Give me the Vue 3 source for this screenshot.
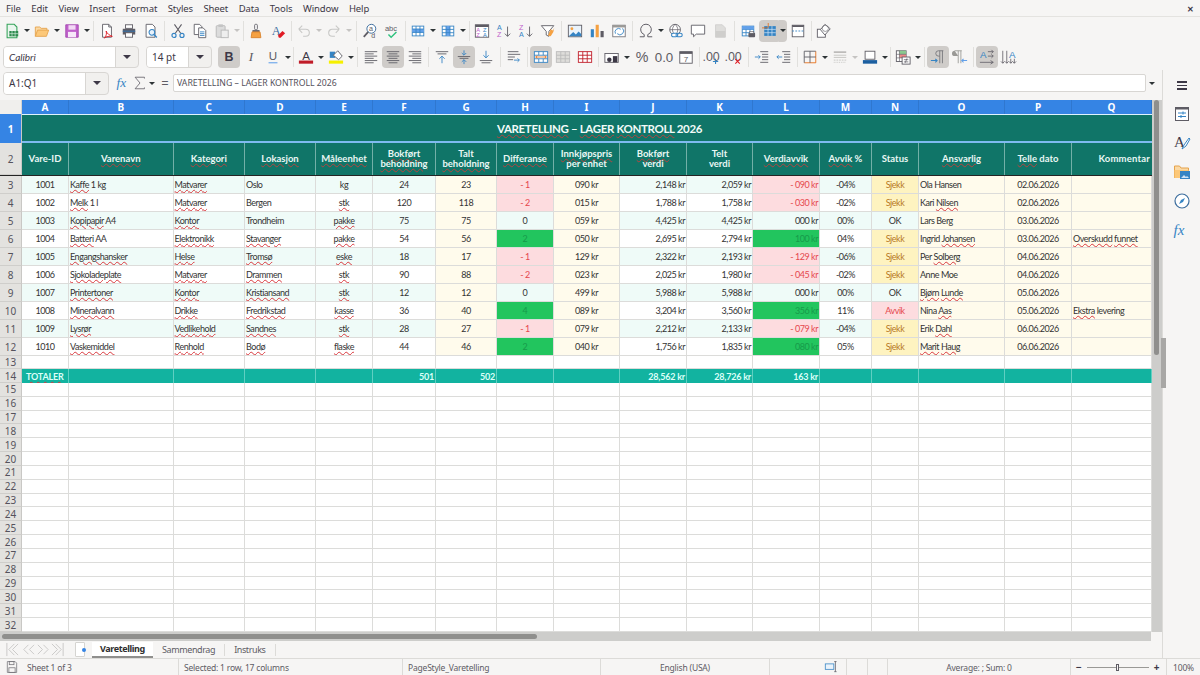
<script setup>
import { computed } from 'vue'

const L = (c, w = 1) => `fill="none" stroke="${c}" stroke-width="${w}"`
const table = (c = '#5e5c64') => `<rect x="2.5" y="3.5" width="13" height="11" fill="#fff" ${L(c)}/><path d="M2.5 7.2h13M2.5 10.9h13M6.8 3.5v11M11.2 3.5v11" ${L(c)}/>`

const icons = {
  new: `<path d="M3.5 1.5h8l3 3v12h-11z" fill="#eaf6ee" ${L('#35a35a', 1.2)}/><rect x="6" y="9" width="10" height="6" fill="#2e8b4f"/><path d="M9 9v6M12.5 9v6M6 12h10" ${L('#dff3e6', .7)}/>`,
  open: `<path d="M1.5 15V4.5h5l1.5 1.5h6.5V8" fill="#fbd9a4" ${L('#e5a34c')}/><path d="M1.5 15l2.5-7h12.5l-2.5 7z" fill="#fcc879" ${L('#e5a34c')}/>`,
  save: `<path d="M2 2h14v14H2z" fill="#c061cb" stroke="#a347ae"/><rect x="5" y="2.5" width="8" height="5" fill="#f2d9f5"/><rect x="4.5" y="10" width="9" height="6" fill="#f7e8f9"/>`,
  pdf: `<path d="M4 1.5h7l3 3V16H4z" fill="#fff" ${L('#5e5c64')}/><path d="M11 1.5v3h3" ${L('#5e5c64')}/><path d="M8 9c1 3 4 5 7 6-3-.3-7 0-9 2 2-2 3-5 2-8z" ${L('#e01b24')}/>`,
  print: `<rect x="5" y="2" width="8" height="4" fill="#fff" ${L('#5e5c64')}/><path d="M2 6.5h14V13H2z" fill="#5e5c64"/><rect x="2" y="8.5" width="14" height="1.5" fill="#3d6e9e"/><rect x="5" y="11" width="8" height="5" fill="#fff" ${L('#5e5c64')}/>`,
  preview: `<path d="M3.5 1.5h7l3 3V16h-10z" fill="#fff" ${L('#5e5c64')}/><circle cx="10" cy="10.5" r="3.2" fill="#e8f2fb" ${L('#3584c4', 1.2)}/><path d="M12.3 12.8l3.2 3.4" ${L('#3584c4', 1.6)}/>`,
  cut: `<path d="M5 1.5l7 10M13 1.5l-7 10" ${L('#5e5c64', 1.2)}/><circle cx="4.5" cy="14" r="2.3" ${L('#3584c4', 1.3)}/><circle cx="13.5" cy="14" r="2.3" ${L('#3584c4', 1.3)}/>`,
  copy: `<path d="M2.5 1.5h6l2.5 2.5v9h-8.5z" fill="#fff" ${L('#5e5c64')}/><path d="M7.5 5.5h5l3 3v8h-8z" fill="#fff" ${L('#5e5c64')}/><path d="M9 10h5M9 12h5M9 14h5" ${L('#3584c4')}/>`,
  paste: `<rect x="2.5" y="3" width="10" height="13" rx="1" fill="#dcdcdc" ${L('#b8b8b8')}/><rect x="5" y="1.5" width="5" height="3" fill="#c4c4c4"/><rect x="8" y="8" width="8" height="8.5" fill="#eee" ${L('#b8b8b8')}/>`,
  clone: `<rect x="7.5" y="1.5" width="3" height="6" rx="1" fill="#fff" ${L('#5e5c64')}/><path d="M5 8h8v2H5z" fill="#5e5c64"/><path d="M4.5 10h9l1 6.5h-11z" fill="#f5a142" ${L('#d9822b')}/>`,
  clear: `<text x="2" y="13" font-size="14" font-family="Liberation Serif" fill="#3d6e9e">A</text><path d="M9 14l5-5 3 2.5-5 5h-2z" fill="#e01b24"/>`,
  undo: `<path d="M3 7h8a4 4 0 0 1 0 8H8M3 7l4-4M3 7l4 4" ${L('#c8c8c6', 1.2)}/>`,
  redo: `<path d="M15 7H7a4 4 0 0 0 0 8h3M15 7l-4-4M15 7l-4 4" ${L('#c8c8c6', 1.2)}/>`,
  find: `<circle cx="10.5" cy="6.5" r="5" fill="#fff" ${L('#3d6e9e', 1.1)}/><path d="M7 10l-5 5.5" ${L('#5e5c64', 2)}/><text x="8" y="9" font-size="8" font-family="Liberation Sans" fill="#5e5c64">a</text><text x="10.5" y="17" font-size="8" font-family="Liberation Sans" fill="#5e5c64">d</text>`,
  spell: `<text x="1" y="9" font-size="8.5" font-family="Liberation Sans" fill="#5e5c64">abc</text><path d="M5 13l3 3 6-6" ${L('#2ec27e', 1.6)}/>`,
  rows: `<rect x="2.5" y="3.5" width="13" height="11" fill="#fff" ${L('#3584c4')}/><rect x="2.5" y="6.8" width="13" height="3.8" fill="#62a0ea"/><path d="M2.5 6.8h13M2.5 10.6h13M6.8 3.5v11M11.2 3.5v11" ${L('#3584c4')}/>`,
  cols: `<rect x="2.5" y="3.5" width="13" height="11" fill="#fff" ${L('#3584c4')}/><rect x="6.8" y="3.5" width="4.4" height="11" fill="#62a0ea"/><path d="M2.5 7.2h13M2.5 10.9h13M6.8 3.5v11M11.2 3.5v11" ${L('#3584c4')}/>`,
  sort: `<rect x="1.5" y="2" width="15" height="14" fill="#fff" ${L('#5e5c64')}/><rect x="1.5" y="2" width="15" height="2.5" fill="#5e5c64"/><text x="2.5" y="10" font-size="6.5" font-family="Liberation Sans" fill="#c061cb">A</text><text x="2.5" y="15.5" font-size="6.5" font-family="Liberation Sans" fill="#c061cb">Z</text><text x="10" y="10" font-size="6.5" font-family="Liberation Sans" fill="#3584c4">Z</text><text x="10" y="15.5" font-size="6.5" font-family="Liberation Sans" fill="#3584c4">A</text>`,
  asc: `<text x="1" y="8" font-size="8" font-family="Liberation Sans" fill="#3584c4">A</text><text x="1" y="16" font-size="8" font-family="Liberation Sans" fill="#c061cb">Z</text><path d="M13 4v11M10 12l3 3 3-3" ${L('#5e5c64')}/>`,
  desc: `<text x="1" y="8" font-size="8" font-family="Liberation Sans" fill="#c061cb">Z</text><text x="1" y="16" font-size="8" font-family="Liberation Sans" fill="#3584c4">A</text><path d="M13 4v11M10 12l3 3 3-3" ${L('#5e5c64')}/>`,
  filter: `<path d="M1.5 3h14l-5.5 6.5V15l-3-1.5V9.5z" fill="#fff" ${L('#5e5c64')}/><path d="M9 14l3-7 2.5 1.5L16 5.5 15 10l-3 5z" fill="#f5a142"/>`,
  image: `<rect x="1.5" y="2.5" width="15" height="13" fill="#eaf3fb" ${L('#5e5c64')}/><circle cx="5.5" cy="6.5" r="1.6" fill="#f5a142"/><path d="M2 15l5-5 3 3 3-3.5 3 3V15z" fill="#3584c4"/>`,
  chart: `<rect x="2" y="7" width="3.5" height="9" fill="#3584c4"/><rect x="7.5" y="2" width="3.5" height="14" fill="#f5a142"/><rect x="13" y="9" width="3.5" height="7" fill="#5e5c64"/>`,
  pivot: `<rect x="2" y="2.5" width="14" height="13" fill="#fff" ${L('#77767b')}/><rect x="2" y="2.5" width="14" height="2.5" fill="#9a9996"/><path d="M5 12a4 4 0 0 1 6-5M13 6a4 4 0 0 1-6 6" ${L('#3584c4')}/>`,
  omega: `<path d="M2 15.5h5V13a6 6 0 1 1 4 0v2.5h5" ${L('#5e5c64', 1.1)}/>`,
  link: `<circle cx="8" cy="7.5" r="6" fill="#fff" ${L('#5e5c64')}/><path d="M2 7.5h12M8 1.5c-4 4-4 8 0 12M8 1.5c4 4 4 8 0 12" ${L('#5e5c64', .8)}/><rect x="4" y="11.5" width="7" height="4" rx="2" fill="#fff" ${L('#3584c4', 1.2)}/><rect x="9" y="11.5" width="7" height="4" rx="2" ${L('#3584c4', 1.2)}/>`,
  comment: `<path d="M1.5 2.5h15v10H7l-3 3v-3H1.5z" fill="#fff" ${L('#5e5c64')}/>`,
  header: `<path d="M4 2h7.5L15 5.5V16H4z" fill="#dedddb" stroke="#d0cfcd"/><rect x="4" y="9" width="11" height="7" fill="#cfcecc"/>`,
  defprint: `${table('#3584c4')}<rect x="2.5" y="3.5" width="13" height="3.7" fill="#62a0ea"/><rect x="9.5" y="11" width="7.5" height="5" rx="1" fill="#5e5c64"/><rect x="11" y="9.5" width="4.5" height="2" fill="#fff" stroke="#5e5c64" stroke-width=".7"/>`,
  freeze: `<rect x="2.5" y="3.5" width="13" height="11" fill="#3584c4"/><path d="M2.5 7.2h13M2.5 10.9h13M6.8 3.5v11M11.2 3.5v11" ${L('#cfe3f5', .8)}/><path d="M7 0v5M0 5.5h7" ${L('#e66100', .8)}/>`,
  split: `<rect x="2.5" y="2.5" width="13" height="13" fill="#fff" ${L('#5e5c64')}/><rect x="2.5" y="2.5" width="13" height="2" fill="#5e5c64"/><path d="M2.5 9h13" stroke="#3584c4" stroke-dasharray="2 1.5" fill="none"/>`,
  shapes: `<rect x="1.5" y="7" width="9" height="9" fill="#fff" ${L('#5e5c64')}/><path d="M10 1.5l6 5-6 7-5-6z" fill="#fff" ${L('#5e5c64')}/><circle cx="10.5" cy="6" r="3.5" ${L('#77767b', .8)}/>`,
  bold: `<text x="9" y="14" text-anchor="middle" font-size="14" font-weight="700" font-family="Liberation Sans" fill="#3d3846">B</text>`,
  italic: `<text x="9" y="14" text-anchor="middle" font-size="15" font-style="italic" font-family="Liberation Serif" fill="#5e5c64">I</text>`,
  under: `<text x="9" y="12.5" text-anchor="middle" font-size="13" font-family="Liberation Sans" fill="#5e5c64">U</text><path d="M4 15.5h10" ${L('#62a0ea', 1.2)}/>`,
  fcolor: `<text x="9" y="12" text-anchor="middle" font-size="13" font-family="Liberation Sans" fill="#3d3846">A</text><rect x="1" y="13" width="16" height="3.5" fill="#c01c28"/>`,
  bgcolor: `<rect x="1" y="13" width="16" height="3.5" fill="#f6f000"/><path d="M2 3h6v7H2z" fill="#3584c4"/><path d="M6 7l5-5 5 6-4 4z" fill="#fff" ${L('#5e5c64')}/>`,
  left: `<path d="M2 3h14M2 5.5h10M2 8h14M2 10.5h10M2 13h14M2 15.5h10" ${L('#5e5c64')}/>`,
  center: `<path d="M2 3h14M4 5.5h10M2 8h14M4 10.5h10M2 13h14M4 15.5h10" ${L('#5e5c64')}/>`,
  right: `<path d="M2 3h14M6 5.5h10M2 8h14M6 10.5h10M2 13h14M6 15.5h10" ${L('#5e5c64')}/>`,
  top: `<path d="M2 3h14M4 5.5h10" ${L('#5e5c64')}/><path d="M9 16V8M6 11l3-3 3 3" ${L('#3584c4')}/>`,
  middle: `<path d="M2 8.5h14M4 10.5h10" ${L('#5e5c64')}/><path d="M9 1.5v5M6.5 4.5L9 7l2.5-2.5M9 17v-5M6.5 14.5L9 12l2.5 2.5" ${L('#3584c4')}/>`,
  bottom: `<path d="M2 13h14M4 15.5h10" ${L('#5e5c64')}/><path d="M9 2v8M6 7l3 3 3-3" ${L('#3584c4')}/>`,
  wrap: `<path d="M2 3h12M2 6h14M2 9h8M2 12h6" ${L('#5e5c64')}/><path d="M9 12.5h6l-2-2M15 12.5l-2 2" ${L('#3584c4')}/>`,
  merge: `<rect x="1.5" y="3" width="15" height="12" fill="#fff" ${L('#3584c4')}/><path d="M1.5 7h15M1.5 11h15M6.5 3v4M11.5 3v4M6.5 11v4M11.5 11v4" ${L('#3584c4')}/><path d="M3 9h12M3 9l2-1.5M3 9l2 1.5M15 9l-2-1.5M15 9l-2 1.5" ${L('#e66100', .8)}/>`,
  mergec: `<rect x="1.5" y="3" width="15" height="12" fill="#deddda" ${L('#bbb')}/><path d="M1.5 7h15M1.5 11h15M6.5 3v12M11.5 3v12" ${L('#bbb')}/>`,
  split2: `<rect x="1.5" y="3" width="15" height="12" fill="#fff" ${L('#c01c28')}/><path d="M1.5 7h15M1.5 11h15M6.5 3v12M11.5 3v12" ${L('#c01c28')}/>`,
  cur: `<rect x="1" y="5" width="15" height="10" fill="#fff" ${L('#5e5c64')}/><circle cx="6" cy="12" r="2.5" fill="#3d3846"/><rect x="10" y="8" width="5" height="7" fill="#3d3846"/>`,
  pct: `<text x="9" y="15" text-anchor="middle" font-size="16" font-family="Liberation Sans" fill="#5e5c64">%</text>`,
  num: `<text x="9" y="15" text-anchor="middle" font-size="15" font-family="Liberation Sans" fill="#5e5c64">0.0</text>`,
  date: `<rect x="2" y="3" width="14" height="13" fill="#fff" ${L('#5e5c64')}/><rect x="2" y="3" width="14" height="2.5" fill="#5e5c64"/><text x="9" y="14.5" text-anchor="middle" font-size="9" font-family="Liberation Sans" fill="#5e5c64">7</text>`,
  adddec: `<text x="8" y="13" text-anchor="middle" font-size="14" font-family="Liberation Sans" fill="#5e5c64">.00</text><path d="M13 11v6M10 14h6" ${L('#3584c4', 1.2)}/>`,
  deldec: `<text x="8" y="13" text-anchor="middle" font-size="14" font-family="Liberation Sans" fill="#5e5c64">.00</text><path d="M10.5 11.5l5 5M15.5 11.5l-5 5" ${L('#e01b24', 1.2)}/>`,
  indinc: `<path d="M7 3h9M9 6h7M9 9h7M9 12h7M7 15h9" ${L('#5e5c64')}/><path d="M1 9h6M5 7l2 2-2 2" ${L('#3584c4')}/>`,
  inddec: `<path d="M7 3h9M9 6h7M9 9h7M9 12h7M7 15h9" ${L('#5e5c64')}/><path d="M1 9h6M3 7L1 9l2 2" ${L('#3584c4')}/>`,
  border: `<path d="M2.5 15.5h13v-13" ${L('#e66100', .9)}/><path d="M2.5 15.5v-13h13M9 2.5v13M2.5 9h13" ${L('#5e5c64')}/>`,
  bstyle: `<path d="M2 3.5h14" ${L('#b0afad', 1.6)}/><path d="M2 7h14M2 9.5h14" ${L('#c4c3c1')}/><path d="M2 12.5h14" stroke="#c4c3c1" stroke-dasharray="2 1" fill="none"/><path d="M2 15h14" stroke="#c4c3c1" stroke-dasharray="1 1" fill="none"/>`,
  bcolor: `<rect x="3.5" y="2.5" width="11" height="9" fill="#fff" ${L('#5e5c64')}/><rect x="1" y="12.5" width="16" height="4" fill="#1c5fa0"/>`,
  cond: `<rect x="1.5" y="2" width="11" height="12" fill="#fff" ${L('#5e5c64')}/><rect x="5" y="2" width="7.5" height="4" fill="#8ac98f"/><rect x="5" y="6" width="7.5" height="4" fill="#e88"/><path d="M1.5 6h11M1.5 10h11M5 2v12" ${L('#5e5c64', .7)}/><rect x="8" y="9" width="9" height="8" fill="#fff" ${L('#5e5c64')}/><path d="M10 12h5M10 14.5h5M13.5 10.5l-2 5" ${L('#5e5c64', .8)}/>`,
  ltr: `<path d="M15 2H9.5a3 3 0 0 0 0 6H11M11 2v14M14 2v14" ${L('#77767b')}/><path d="M1 13h7M6 11l2 2-2 2" ${L('#3584c4', 1.2)}/>`,
  rtl: `<path d="M3 2h8M7 2v14M10 2v14" ${L('#9a9996')}/><path d="M3 2a3 3 0 0 0 0 6h4z" fill="#9a9996"/><path d="M11 13h6M13 11l-2 2 2 2" ${L('#62a0ea', 1.2)}/>`,
  ah: `<text x="1" y="10" font-size="11" font-family="Liberation Sans" fill="#3584c4">A</text><path d="M1 15h15M13 13l3 2-3 2M10 3h6M14 1l2 2-2 2M10 8h6M14 6l2 2-2 2" ${L('#5e5c64', .9)}/>`,
  av: `<text x="9" y="10" font-size="11" font-family="Liberation Sans" fill="#3584c4">A</text><path d="M2 2v14M0 14l2 2 2-2M6.5 2v14M4.5 14l2 2 2-2M11 11v5M9 14l2 2 2-2M15 11v5M13 14l2 2 2-2" ${L('#5e5c64', .9)}/>`,
  fx: `<text x="0.5" y="14" font-size="15" font-style="italic" font-family="Liberation Serif" fill="#3584c4">fx</text>`,
  sum: `<path d="M14 4V2.5H3.5L9 9l-5.5 6.5H14V14" ${L('#5e5c64', .9)}/>`,
  props: `<rect x="2.5" y="2.5" width="13" height="13" fill="#fff" ${L('#5e5c64')}/><rect x="2.5" y="2.5" width="13" height="2" fill="#5e5c64"/><path d="M5 8h8M5 11.5h8M10 6.5v3M8 10v3" ${L('#3584c4')}/>`,
  styles: `<text x="1" y="13" font-size="15" font-family="Liberation Serif" fill="#3d3846">A</text><path d="M9 15l2-4 5-7 1 1-4 7z" fill="#fff" ${L('#3584c4')}/>`,
  gallery: `<path d="M1.5 15V3h5l1.5 2h7.5v3" fill="#fbd9a4" ${L('#e5a34c')}/><path d="M1.5 15V7h14v8z" fill="#fcc879"/><rect x="7" y="8" width="10" height="8" fill="#3584c4"/><path d="M8 15l3-3 2 2 1-1 2 2z" fill="#cfe3f5"/>`,
  nav: `<circle cx="9" cy="9" r="7" fill="#fff" ${L('#3d6e9e', 1.2)}/><path d="M12 6L10 10 6 12 8 8z" fill="#3584c4"/>`,
  docstat: `<path d="M3 2h10l2 2v12H3z" ${L('#77767b')}/><rect x="5.5" y="2" width="6" height="4" ${L('#77767b')}/><rect x="5" y="10" width="8" height="6" ${L('#77767b')}/>`,
  selmode: `<rect x="1" y="5" width="11" height="7" fill="#eaf3fb" ${L('#3584c4')}/><path d="M14 2v13M12.5 2h3M12.5 15h3" ${L('#5e5c64')}/>`
}

// |N is a separator taking N pixels, * marks a pressed button
const bar1 = ['new', 'd', 'open', 'd', 'save', 'd', '|5', 'pdf', 'print', 'preview', '|5', 'cut', 'copy', 'paste', 'dx', '|4', 'clone', 'clear', '|4', 'undo', 'dx', 'redo', 'dx', '|6', 'find', 'spell', '|4', 'rows', 'd', 'cols', 'd', '|4', 'sort', 'asc', 'desc', 'filter', '|5', 'image', 'chart', 'pivot', '|5', 'omega', 'd', 'link', 'comment', 'header', '|6', 'defprint', 'freeze*', 'd*', 'split', '|4', 'shapes']
const bar2 = ['bold*', 'italic', 'under', 'd', '|3', 'fcolor', 'd', 'bgcolor', 'd', '|5', 'left', 'center*', 'right', '|5', 'top', 'middle*', 'bottom', '|6', 'wrap', '|5', 'merge*', 'mergec', 'split2', '|5', 'cur', 'd', 'pct', 'num', 'date', '|4', 'adddec', 'deldec', '|6', 'indinc', 'inddec', '|4', 'border', 'd', 'bstyle', 'dx', 'bcolor', 'd', '|3', 'cond', 'd', '|5', 'ltr*', 'rtl', '|5', 'ah*', 'av']

const tool = (k) => {
  const active = k.endsWith('*')
  const name = active ? k.slice(0, -1) : k
  if (name[0] === '|') return { kind: 'sep', cls: 's' + name.slice(1) }
  if (name === 'd' || name === 'dx') return { kind: name === 'dx' ? 'drop off' : 'drop', active }
  return { kind: 'btn', name, active }
}
const tools1 = bar1.map(tool)
const tools2 = bar2.map(tool)

const menus = ['File', 'Edit', 'View', 'Insert', 'Format', 'Styles', 'Sheet', 'Data', 'Tools', 'Window', 'Help']
const letters = 'ABCDEFGHIJKLMNOPQ'.split('')
const sideIcons = ['props', 'styles', 'gallery', 'nav', 'fx']

const headers = ['Vare-ID', '~Varenavn~', '~Kategori~', '~Lokasjon~', '~Måleenhet~', ['~Bokført~', '~beholdning~'], ['Talt', '~beholdning~'], '~Differanse~', ['~Innkjøpspris~', 'per enhet'], ['~Bokført~', 'verdi'], ['Telt', 'verdi'], '~Verdiavvik~', '~Avvik~ %', 'Status', '~Ansvarlig~', '~Telle~ dato', 'Kommentar']

const data = [
  [1001, '~Kaffe~ 1 kg', '~Matvarer~', 'Oslo', 'kg', 24, 23, '- 1', '090 kr', '2,148 kr', '2,059 kr', '- 090 kr', '-04%', 'Sjekk', 'Ola Hansen', '02.06.2026', ''],
  [1002, '~Melk~ 1 l', '~Matvarer~', 'Bergen', '~stk~', 120, 118, '- 2', '015 kr', '1,788 kr', '1,758 kr', '- 030 kr', '-02%', 'Sjekk', 'Kari ~Nilsen~', '02.06.2026', ''],
  [1003, '~Kopipapir~ A4', '~Kontor~', 'Trondheim', '~pakke~', 75, 75, '0', '059 kr', '4,425 kr', '4,425 kr', '000 kr', '00%', 'OK', 'Lars Berg', '03.06.2026', ''],
  [1004, '~Batteri~ AA', '~Elektronikk~', '~Stavanger~', '~pakke~', 54, 56, '2', '050 kr', '2,695 kr', '2,794 kr', '100 kr', '04%', 'Sjekk', 'Ingrid ~Johansen~', '03.06.2026', '~Overskudd~ ~funnet~'],
  [1005, '~Engangshansker~', '~Helse~', '~Tromsø~', '~eske~', 18, 17, '- 1', '129 kr', '2,322 kr', '2,193 kr', '- 129 kr', '-06%', 'Sjekk', 'Per ~Solberg~', '04.06.2026', ''],
  [1006, '~Sjokoladeplate~', '~Matvarer~', '~Drammen~', '~stk~', 90, 88, '- 2', '023 kr', '2,025 kr', '1,980 kr', '- 045 kr', '-02%', 'Sjekk', 'Anne Moe', '04.06.2026', ''],
  [1007, '~Printertoner~', '~Kontor~', '~Kristiansand~', '~stk~', 12, 12, '0', '499 kr', '5,988 kr', '5,988 kr', '000 kr', '00%', 'OK', '~Bjørn~ ~Lunde~', '05.06.2026', ''],
  [1008, '~Mineralvann~', '~Drikke~', '~Fredrikstad~', '~kasse~', 36, 40, '4', '089 kr', '3,204 kr', '3,560 kr', '356 kr', '11%', 'Avvik', 'Nina ~Aas~', '05.06.2026', '~Ekstra~ levering'],
  [1009, '~Lysrør~', '~Vedlikehold~', '~Sandnes~', '~stk~', 28, 27, '- 1', '079 kr', '2,212 kr', '2,133 kr', '- 079 kr', '-04%', 'Sjekk', 'Erik ~Dahl~', '06.06.2026', ''],
  [1010, '~Vaskemiddel~', '~Renhold~', '~Bodø~', '~flaske~', 44, 46, '2', '040 kr', '1,756 kr', '1,835 kr', '080 kr', '05%', 'Sjekk', '~Marit~ ~Haug~', '06.06.2026', '']
]

// ~word~ gets the spellcheck underline
const parts = (s) => String(s).split(/(~[^~]+~)/).filter(Boolean).map((p) => (p[0] === '~' ? { t: p.slice(1, -1), sp: true } : { t: p, sp: false }))

const aligns = ['c', 'l', 'l', 'l', 'c', 'c', 'c', 'c', 'c', 'r', 'r', 'r', 'c', 'c', 'l', 'c', 'l']
const yellow = [6, 8, 14, 15, 16]

const rows = computed(() => data.map((r, i) => ({
  n: i + 3,
  cells: r.map((v, c) => {
    const cls = [aligns[c], i % 2 ? 'plain' : 'mint']
    if (yellow.includes(c)) cls.push('yellow')
    if (c === 7 || c === 11) {
      const d = r[7]
      if (d[0] === '-') cls.push('neg')
      else if (d !== '0') cls.push('pos')
    }
    if (c === 13) cls.push(v === 'Sjekk' ? 'check' : v === 'Avvik' ? 'neg' : 'mint')
    return { parts: parts(v), cls }
  })
})))

const totals = { 5: '501', 6: '502', 9: '28,562 kr', 10: '28,726 kr', 11: '163 kr' }
const emptyRows = Array.from({ length: 18 }, (_, i) => i + 15)
</script>

<template>
  <div class="app">
    <div class="menubar">
      <span v-for="m in menus" :key="m" class="menu">{{ m }}</span>
      <span class="close">✕</span>
    </div>

    <div class="toolbar one">
      <template v-for="(t, i) in tools1" :key="i">
        <span v-if="t.kind === 'sep'" class="sep" :class="t.cls"></span>
        <span v-else-if="t.kind !== 'btn'" class="caret" :class="[t.kind, { on: t.active }]"></span>
        <span v-else class="btn" :class="{ on: t.active }"><svg viewBox="0 0 18 18" v-html="icons[t.name]"></svg></span>
      </template>
    </div>

    <div class="toolbar two">
      <div class="combo font"><span class="field ital">Calibri</span><span class="arrow"></span></div>
      <div class="combo size"><span class="field">14 pt</span><span class="arrow"></span></div>
      <template v-for="(t, i) in tools2" :key="i">
        <span v-if="t.kind === 'sep'" class="sep" :class="t.cls"></span>
        <span v-else-if="t.kind !== 'btn'" class="caret" :class="t.kind"></span>
        <span v-else class="btn" :class="{ on: t.active }"><svg viewBox="0 0 18 18" v-html="icons[t.name]"></svg></span>
      </template>
    </div>

    <div class="body">
      <div class="work">
        <div class="formula">
          <div class="combo namebox"><span class="field">A1:Q1</span><span class="arrow"></span></div>
          <span class="fbtn fx"><svg viewBox="0 0 18 18" v-html="icons.fx"></svg></span>
          <span class="fbtn"><svg viewBox="0 0 18 18" v-html="icons.sum"></svg></span>
          <span class="caret small-caret"></span>
          <span class="equals">=</span>
          <div class="input">VARETELLING – LAGER KONTROLL 2026</div>
          <span class="caret end-caret"></span>
        </div>

        <div class="sheetwrap">
          <div class="sheet">
            <div class="row colhead">
              <div class="corner"></div>
              <div v-for="l in letters" :key="l" class="chead">{{ l }}</div>
            </div>
            <div class="row r1">
              <div class="rh sel">1</div>
              <div class="title">
                <span><span class="sp">VARETELLING</span> – <span class="sp">LAGER</span> <span class="sp">KONTROLL</span> 2026</span>
              </div>
            </div>
            <div class="row r2">
              <div class="rh">2</div>
              <div v-for="(h, i) in headers" :key="i" class="hcell">
                <template v-if="Array.isArray(h)">
                  <div v-for="(ln, j) in h" :key="j"><template v-for="(p, k) in parts(ln)" :key="k"><span :class="{ sp: p.sp }">{{ p.t }}</span></template></div>
                </template>
                <div v-else><template v-for="(p, k) in parts(h)" :key="k"><span :class="{ sp: p.sp }">{{ p.t }}</span></template></div>
              </div>
            </div>
            <div v-for="r in rows" :key="r.n" class="row rdata">
              <div class="rh">{{ r.n }}</div>
              <div v-for="(c, i) in r.cells" :key="i" class="cell" :class="c.cls">
                <span><template v-for="(p, k) in c.parts" :key="k"><span :class="{ sp: p.sp }">{{ p.t }}</span></template></span>
              </div>
            </div>
            <div class="row r13">
              <div class="rh">13</div>
              <div v-for="l in letters" :key="l" class="cell plain"></div>
            </div>
            <div class="row r14">
              <div class="rh">14</div>
              <div v-for="(l, i) in letters" :key="l" class="tcell" :class="{ first: i === 0 }">
                <span v-if="i === 0" class="sp">TOTALER</span>
                <span v-else-if="totals[i]">{{ totals[i] }}</span>
              </div>
            </div>
            <div v-for="n in emptyRows" :key="n" class="row rempty">
              <div class="rh">{{ n }}</div>
              <div v-for="l in letters" :key="l" class="cell plain"></div>
            </div>
          </div>
          <div class="vscroll"><div class="vthumb"></div></div>
        </div>

        <div class="hscroll"><div class="hthumb"></div></div>

        <div class="tabbar">
          <svg class="tabnav" viewBox="0 0 62 16">
            <path d="M1 1v14M9 2L3 8l6 6M13 2L7 8l6 6M24 3l-5 5 5 5M30 3l-5 5 5 5M34 3l5 5-5 5M40 3l5 5-5 5M49 2l6 6-6 6M53 2l6 6-6 6M61 1v14" fill="none" stroke="#c9c8c6" />
          </svg>
          <span class="tabadd"><i></i></span>
          <span class="tab active">Varetelling</span>
          <span class="tab">Sammendrag</span>
          <span class="tab">Instruks</span>
        </div>
      </div>

      <div class="sidebar">
        <div class="hamb"><i></i><i></i><i></i></div>
        <span v-for="s in sideIcons" :key="s" class="sidebtn"><svg viewBox="0 0 18 18" v-html="icons[s]"></svg></span>
      </div>
      <div class="handle"></div>
    </div>

    <div class="status">
      <div class="st first"><svg viewBox="0 0 18 18" v-html="icons.docstat"></svg><span>Sheet 1 of 3</span></div>
      <div class="st">Selected: 1 row, 17 columns</div>
      <div class="st">PageStyle_Varetelling</div>
      <div class="st mid">English (USA)</div>
      <div class="st mode"><svg class="wide" viewBox="0 0 18 18" v-html="icons.selmode"></svg></div>
      <div class="st"></div>
      <div class="st"></div>
      <div class="st mid">Average: ; Sum: 0</div>
      <div class="st zoom">
        <b class="pm">−</b><span class="slider"><i></i></span><b class="pm">+</b>
      </div>
      <div class="st mid">100%</div>
    </div>
  </div>
</template>

<style>
html, body { margin: 0; background: #f6f5f4; }
</style>

<style scoped>
.app {
  --cols: 22px 47px 104.5px 71.5px 71px 57px 63px 61px 57px 66px 67px 66px 67px 52px 47px 86px 67px 80px;
  width: 1200px;
  height: 675px;
  display: flex;
  flex-direction: column;
  overflow: hidden;
  background: #f6f5f4;
  font-family: "Noto Sans", sans-serif;
  color: #3d3846;
  position: relative;
}
.menubar {
  height: 17px;
  display: flex;
  align-items: center;
  font-size: 9.5px;
  letter-spacing: -0.1px;
  padding-left: 1px;
  border-bottom: 1px solid #e4e3e0;
  box-sizing: border-box;
}
.menu { padding: 0 5px; margin-right: 0.5px; }
.close { margin-left: auto; margin-right: 6px; font-size: 8px; font-weight: 700; }

.toolbar { display: flex; align-items: center; }
.toolbar.one { height: 27px; padding-left: 1px; }
.toolbar.two { height: 26px; padding-left: 3px; }
.btn {
  width: 22px;
  height: 22px;
  display: flex;
  align-items: center;
  justify-content: center;
  border-radius: 4px;
  flex: none;
}
.btn svg { width: 16px; height: 16px; display: block; overflow: visible; }
.btn.on { background: #cfccc9; }
.sep { width: 1px; height: 20px; background: #e1e0dd; flex: none; }
.s3 { margin: 0 1px; }
.s4 { margin: 0 1.5px; }
.s5 { margin: 0 2px; }
.s6 { margin: 0 2.5px; }
.caret { width: 8px; display: flex; justify-content: center; flex: none; align-items: center; }
.caret::after {
  content: "";
  border-left: 3px solid transparent;
  border-right: 3px solid transparent;
  border-top: 3px solid #2e3436;
}
.caret.off::after { border-top-color: #c5c4c2; }
.caret.on { background: #cfccc9; border-radius: 0 4px 4px 0; height: 22px; margin-left: -2px; }

.combo {
  display: flex;
  height: 22px;
  border: 1px solid #d8d6d3;
  border-radius: 4px;
  box-sizing: border-box;
  background: #f1f0ee;
  flex: none;
  font-size: 10px;
}
.field {
  flex: 1;
  background: #fff;
  display: flex;
  align-items: center;
  padding-left: 5px;
  border-right: 1px solid #d8d6d3;
  border-radius: 3px 0 0 3px;
}
.ital { font-style: italic; font-family: Lato, sans-serif; }
.arrow { width: 22px; display: flex; align-items: center; justify-content: center; flex: none; }
.arrow::after {
  content: "";
  border-left: 4px solid transparent;
  border-right: 4px solid transparent;
  border-top: 4px solid #3d3846;
}
.font { width: 136px; margin-right: 7px; }
.size { width: 66px; margin-right: 6px; }

.body { flex: 1; display: flex; min-height: 0; position: relative; }
.work { width: 1162px; display: flex; flex-direction: column; flex: none; }

.formula { height: 30px; display: flex; align-items: center; padding-left: 3px; box-sizing: border-box; padding-bottom: 4px; }
.namebox { width: 106px; height: 23px; margin-right: 7px; }
.namebox .field { padding-left: 5px; }
.fbtn { width: 15px; height: 16px; flex: none; }
.fbtn svg { width: 16px; height: 16px; display: block; overflow: visible; }
.fx { width: 16px; }
.small-caret { width: 10px; }
.equals { width: 16px; text-align: center; font-size: 13px; flex: none; color: #5e5c64; }
.input {
  width: 973px;
  height: 18px;
  background: #fff;
  border: 1px solid #d8d6d3;
  border-radius: 2px;
  box-sizing: border-box;
  font-size: 8.7px;
  line-height: 16px;
  padding-left: 3px;
  flex: none;
  color: #55525c;
}
.end-caret { width: 12px; }

.sheetwrap { display: flex; height: 532px; }
.sheet { width: 1152px; flex: none; font-family: Lato, sans-serif; background: #fff; }
.row { display: grid; grid-template-columns: var(--cols); box-sizing: border-box; }
.colhead { height: 14px; }
.r1 { height: 29px; }
.r2 { height: 33px; border-bottom: 1px solid #242424; }
.rdata { height: 18px; }
.r13 { height: 13px; }
.r14 { height: 14px; }
.rempty { height: 13.83px; }

.corner { background: #f0efed; border-right: 1px solid #d5d4d1; }
.chead {
  background: #3584e4;
  color: #fff;
  font: 700 10px "Noto Sans", sans-serif;
  display: flex;
  align-items: center;
  justify-content: center;
  border-right: 1px solid #2f77cf;
}
.rh {
  background: #e3e2df;
  color: #55525c;
  font: 10px "Noto Sans", sans-serif;
  display: flex;
  align-items: center;
  justify-content: center;
  border-right: 1px solid #c9c8c5;
  border-bottom: 1px solid #cfcecb;
  box-sizing: border-box;
  min-height: 0;
  overflow: hidden;
}
.rh.sel { background: #3584e4; color: #fff; font-weight: 700; border-bottom: 0; }
.title {
  grid-column: 2 / -1;
  background: #107568;
  color: #f2fbf9;
  font-weight: 700;
  font-size: 11.5px;
  letter-spacing: -0.35px;
  display: flex;
  align-items: center;
  justify-content: center;
  padding-left: 25px;
  border-top: 1px solid #dff3ff;
  border-bottom: 2px solid #7fbbf0;
  box-sizing: border-box;
}
.hcell {
  background: #107568;
  color: #e9f7f4;
  font-weight: 700;
  font-size: 9.5px;
  line-height: 10px;
  display: flex;
  flex-direction: column;
  align-items: center;
  justify-content: center;
  text-align: center;
  border-right: 1px solid #72b0a8;
  box-sizing: border-box;
  white-space: nowrap;
  overflow: hidden;
}
.hcell:last-child { align-items: flex-end; padding-right: 2px; letter-spacing: 0.2px; border-right: 0; }
.hcell .sp, .title .sp { text-decoration-color: #b5443f; }
.cell {
  font-size: 9px;
  letter-spacing: -0.45px;
  color: #333;
  display: flex;
  align-items: center;
  padding: 0 1px;
  border-right: 1px solid #dcdcda;
  border-bottom: 1px solid #dcdcda;
  box-sizing: border-box;
  min-width: 0;
  white-space: nowrap;
  overflow: hidden;
}
.cell.l { justify-content: flex-start; }
.cell.c { justify-content: center; }
.cell.r { justify-content: flex-end; }
.plain { background: #fff; }
.mint { background: #effbf8; }
.yellow { background: #fffbec; }
.neg { background: #fddcdf; color: #e5484d; }
.pos { background: #22c55e; color: #179a4a; }
.check { background: #fef3c0; color: #b7791f; }
.tcell {
  background: #12b3a0;
  color: #dcfff8;
  font-weight: 700;
  font-size: 9px;
  letter-spacing: -0.2px;
  display: flex;
  align-items: center;
  justify-content: flex-end;
  padding: 0 1px;
  border-right: 1px solid #5fcfc2;
  box-sizing: border-box;
  white-space: nowrap;
  overflow: hidden;
}
.tcell.first { justify-content: flex-start; padding-left: 4px; }
.sp {
  text-decoration: underline wavy #d9393e;
  text-decoration-thickness: 1px;
  text-underline-offset: 1px;
}

.vscroll { width: 10px; background: #cdcdcb; flex: none; padding-left: 2px; box-sizing: border-box; }
.vthumb { width: 5px; height: 255px; background: #8f8f8d; border-radius: 3px; }
.hscroll { height: 9px; width: 1151px; background: #cdcdcb; padding: 2px 0 0 2px; box-sizing: border-box; }
.hthumb { width: 535px; height: 5px; background: #8f8f8d; border-radius: 3px; }

.tabbar { height: 17px; display: flex; align-items: center; font-size: 9px; letter-spacing: -0.4px; color: #5e5c64; }
.tabnav { width: 60px; height: 15px; margin-left: 5px; flex: none; }
.tabadd {
  width: 10px;
  height: 15px;
  background: #fff;
  border: 1px solid #d5d4d1;
  margin-left: 10px;
  border-radius: 1px;
  display: flex;
  align-items: center;
  justify-content: flex-end;
  flex: none;
  box-sizing: border-box;
}
.tabadd i { width: 4px; height: 4px; border-radius: 50%; background: #3584e4; margin-right: -2px; display: block; }
.tab { padding: 0 9px; border-right: 1px solid #dcdbd8; height: 12px; line-height: 12px; }
.tab.active {
  margin-left: 7px;
  padding: 0 8px;
  background: #fff;
  color: #2e2e2e;
  font-weight: 700;
  border-right: 0;
  border-bottom: 2px solid #8f8f8d;
  height: 14px;
  line-height: 14px;
  width: 45px;
}

.sidebar {
  width: 38px;
  border-left: 1px solid #dcdbd8;
  box-sizing: border-box;
  display: flex;
  flex-direction: column;
  align-items: center;
  padding-top: 11px;
}
.hamb { width: 10px; display: flex; flex-direction: column; gap: 2px; margin-bottom: 15px; }
.hamb i { height: 1.5px; background: #3d3846; display: block; }
.sidebtn { width: 18px; height: 18px; margin-bottom: 11px; }
.sidebtn svg { width: 18px; height: 18px; display: block; overflow: visible; }
.handle { position: absolute; left: 1161px; top: 268px; width: 5px; height: 50px; background: #a8a7a5; }

.status {
  height: 17px;
  display: grid;
  grid-template-columns: 179px 224px 198px 169px 77px 21px 20px 183px 96px 33px;
  border-top: 1px solid #dcdbd8;
  box-sizing: border-box;
  font-size: 8.5px;
  letter-spacing: -0.2px;
  color: #5e5c64;
}
.st { display: flex; align-items: center; padding-left: 5px; border-right: 1px solid #dcdbd8; box-sizing: border-box; white-space: nowrap; }
.st:last-child { border-right: 0; }
.st svg { width: 14px; height: 14px; flex: none; }
.st.first { gap: 8px; }
.st.mid { justify-content: center; padding-left: 0; }
.st.mode { justify-content: flex-end; padding-right: 6px; }
.st svg.wide { width: 17px; height: 14px; }
.zoom { gap: 5px; padding-left: 5px; }
.pm { font-weight: 700; font-size: 10px; color: #3d3846; }
.slider { width: 62px; height: 1px; background: #9a9996; position: relative; display: block; }
.slider i { position: absolute; left: 29px; top: -3px; width: 3px; height: 7px; background: #f6f5f4; border: 1px solid #5e5c64; box-sizing: border-box; }
</style>
